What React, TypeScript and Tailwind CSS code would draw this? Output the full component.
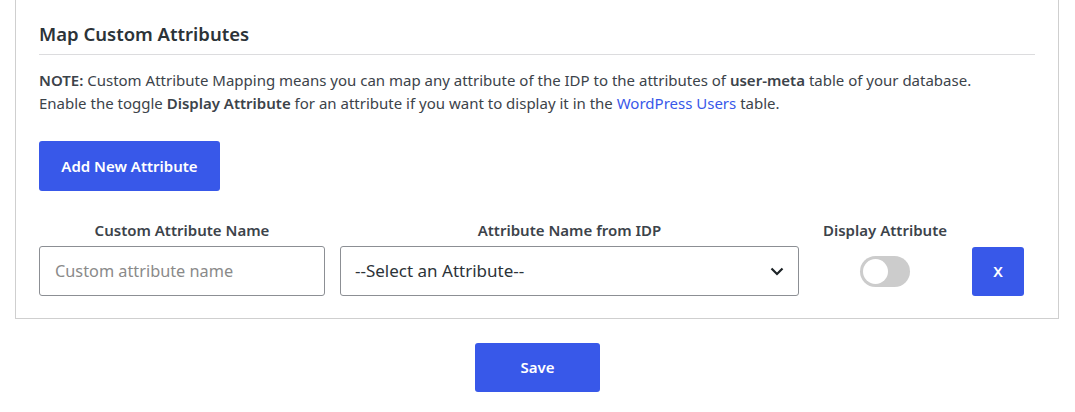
export default function App() {
  return (
    <div className="min-h-[412px] bg-white font-['Noto_Sans',sans-serif] text-[#3c434a]">
      <div className="ml-[15px] mr-[16px] border-x border-b border-[#cfcfcf] bg-white px-[23px] pb-[22px] pt-[21px]">
        <h2 className="border-b border-[#dcdcde] pb-[7px] text-[18.5px] font-semibold leading-[26px] text-[#2c3338]">
          Map Custom Attributes
        </h2>
        <p className="mt-[14px] text-[15px] leading-[23px]">
          <b className="font-semibold">NOTE:</b> Custom Attribute Mapping means you can map any attribute of the IDP to
          the attributes of <b className="font-semibold">user-meta</b> table of your database.
          <br />
          Enable the toggle <b className="font-semibold">Display Attribute</b> for an attribute if you want to display it
          in the <span className="text-[#3858e9]">WordPress Users</span> table.
        </p>
        <button className="mt-[26px] h-[50px] w-[181px] rounded-[3px] bg-[#3858e9] text-[15px] font-semibold text-white">
          Add New Attribute
        </button>

        <div className="mt-[29px] flex items-end">
          <div className="flex w-[286px] flex-col items-center">
            <span className="text-[15px] font-semibold leading-[20px]">Custom Attribute Name</span>
            <input
              className="mt-[6px] h-[50px] w-full rounded-[3px] border border-[#8c8f94] px-[15px] text-[16.3px] outline-none placeholder:text-[#8a8a8a]"
              placeholder="Custom attribute name"
            />
          </div>
          <div className="ml-[15px] flex w-[459px] flex-col items-center">
            <span className="text-[15px] font-semibold leading-[20px]">Attribute Name from IDP</span>
            <div className="mt-[6px] flex h-[50px] w-full items-center justify-between rounded-[3px] border border-[#8c8f94] pl-[14px] pr-[14px] text-[17px] text-[#2c3338]">
              <span>--Select an Attribute--</span>
              <svg width="14" height="9" viewBox="0 0 14 9" fill="none">
                <path d="M1.5 1.5L7 7L12.5 1.5" stroke="#1d2327" strokeWidth="2.2" />
              </svg>
            </div>
          </div>
          <div className="ml-[22px] flex w-[128px] flex-col items-center">
            <span className="text-[15px] font-semibold leading-[20px]">Display Attribute</span>
            <div className="mb-[9px] mt-[16px] flex h-[31px] w-[50px] items-center rounded-full bg-[#cccccc] px-[3px]">
              <span className="h-[25px] w-[25px] rounded-full bg-white" />
            </div>
          </div>
          <button className="ml-[23px] h-[49px] w-[52px] rounded-[3px] bg-[#3858e9] text-[15px] font-semibold text-white">
            X
          </button>
        </div>
      </div>

      <div className="flex justify-center pt-[24px]">
        <button className="h-[49px] w-[125px] rounded-[3px] bg-[#3858e9] text-[15px] font-semibold text-white">
          Save
        </button>
      </div>
    </div>
  );
}
